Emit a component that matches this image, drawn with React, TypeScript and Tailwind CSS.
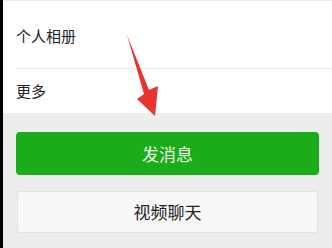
export default function App() {
  const font = { fontFamily: '"Noto Sans CJK SC", "Noto Sans", sans-serif' };
  return (
    <div
      className="relative flex h-[248px] w-[332px] flex-col overflow-hidden border-l-[3px] border-black bg-[#ededed]"
      style={font}
    >
      {/* list rows */}
      <div className="flex flex-col border-t border-[#ececec] bg-white pl-[13px]">
        <div className="flex h-[68px] items-center border-b border-[#e5e5e5] pr-[12px] pt-[3px] text-[15px] text-[#222]">
          个人相册
        </div>
        <div className="flex h-[44px] items-center text-[15px] text-[#222]">更多</div>
      </div>

      {/* buttons */}
      <div className="flex flex-col gap-[16px] px-[13px] pt-[19px]">
        <button className="flex h-[43px] items-center justify-center rounded-[4px] bg-[#1aad19] text-[17px] text-[#eef8ee]">
          发消息
        </button>
        <button className="mx-px flex h-[42px] items-center justify-center rounded-[3px] border border-[#e2e2e2] bg-[#f8f8f8] text-[17px] text-[#222]">
          视频聊天
        </button>
      </div>

      {/* red arrow annotation */}
      <svg
        className="absolute left-0 top-0"
        width="332"
        height="248"
        viewBox="0 0 332 248"
      >
        <polygon
          points="124,35 146,90 155,86 152,116 134,99 141,94"
          fill="#e8332e"
        />
      </svg>
    </div>
  );
}
